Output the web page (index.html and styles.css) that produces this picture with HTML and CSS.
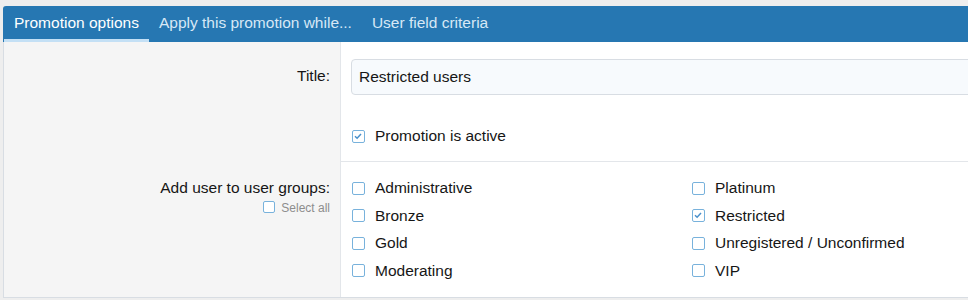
FILE: index.html
```html
<!DOCTYPE html>
<html lang="en">
<head>
    <meta charset="UTF-8">
    <meta name="viewport" content="width=device-width, initial-scale=1.0">
    <title>Promotion options</title>
    <link rel="stylesheet" href="styles.css">
</head>
<body>
    <div id="main">
        <div class="tabs">
            <span class="tab active">Promotion options</span>
            <span class="tab">Apply this promotion while...</span>
            <span class="tab">User field criteria</span>
        </div>

        <div class="form-row">
            <div class="row-label title-label">Title:</div>
            <div class="row-field">
                <input class="text-input" type="text" value="Restricted users">
                <div class="check-line active-line">
                    <span class="box checked"><svg viewBox="0 0 10 10"><path d="M2 5.2 L4.1 7.2 L8 3" /></svg></span>
                    <span>Promotion is active</span>
                </div>
            </div>
        </div>

        <div class="form-row">
            <div class="row-label groups-label">
                <div>Add user to user groups:</div>
                <div class="select-all"><span class="box small"></span>Select all</div>
            </div>
            <div class="row-field groups">
                <div class="check-line"><span class="box"></span><span>Administrative</span></div>
                <div class="check-line"><span class="box"></span><span>Platinum</span></div>
                <div class="check-line"><span class="box"></span><span>Bronze</span></div>
                <div class="check-line"><span class="box checked"><svg viewBox="0 0 10 10"><path d="M2 5.2 L4.1 7.2 L8 3" /></svg></span><span>Restricted</span></div>
                <div class="check-line"><span class="box"></span><span>Gold</span></div>
                <div class="check-line"><span class="box"></span><span>Unregistered / Unconfirmed</span></div>
                <div class="check-line"><span class="box"></span><span>Moderating</span></div>
                <div class="check-line"><span class="box"></span><span>VIP</span></div>
            </div>
        </div>
    </div>
</body>
</html>
```

FILE: styles.css
```css
body {
    font-family: "Liberation Sans", Arial, sans-serif;
    font-size: 15.5px;
    color: #161616;
    background: #eeeeee;
    margin: 0;
    padding: 6px 0 0 3px;
    overflow: hidden;
}

#main {
    width: 1000px;
    background: #ffffff;
    border: 1px solid #d8dde3;
    border-top: none;
    border-radius: 3px 3px 0 0;
}

.tabs {
    display: flex;
    background: #2677b2;
    height: 36px;
    border-radius: 3px 3px 0 0;
    margin: 0 -1px;
    padding-left: 1px;
}

.tab {
    padding: 0 10px;
    line-height: 34px;
    color: #d7e8f6;
    border-bottom: 3px solid transparent;
    font-size: 15.5px;
}

.tab.active {
    color: #ffffff;
    border-bottom-color: #c4e0f5;
}

.form-row {
    display: grid;
    grid-template-columns: 337px 1fr;
}

.row-label {
    background: #f5f5f5;
    text-align: right;
    padding-right: 10px;
    border-right: 1px solid #e3e6ea;
}

.title-label {
    padding-top: 25px;
}

.groups-label {
    padding-top: 16px;
    line-height: 20px;
}

.row-field {
    padding: 17px 10px 15px;
    border-bottom: 1px solid #e3e6ea;
}

.form-row:last-child .row-field {
    border-bottom: none;
}

.text-input {
    display: block;
    box-sizing: border-box;
    width: 100%;
    height: 36px;
    font-family: inherit;
    font-size: 15.5px;
    color: #161616;
    background: #f7fafd;
    border: 1px solid #d8dde3;
    border-radius: 4px;
    padding: 0 7px;
}

.check-line {
    display: flex;
    align-items: center;
    gap: 10px;
    line-height: 20px;
    padding-left: 1px;
}

.active-line {
    margin-top: 31px;
}

.groups {
    display: grid;
    grid-template-columns: 340px 340px;
    row-gap: 7.5px;
    padding-top: 16px;
    padding-bottom: 16px;
}

.box {
    display: inline-block;
    box-sizing: border-box;
    width: 13px;
    height: 13px;
    border: 1.5px solid #78b2dc;
    border-radius: 2px;
    background: #ffffff;
    flex: none;
}

.box svg {
    display: block;
    width: 10px;
    height: 10px;
}

.box path {
    fill: none;
    stroke: #4a90cb;
    stroke-width: 1.5;
}

.box.small {
    width: 12px;
    height: 12px;
    margin-right: 6px;
    vertical-align: -1px;
}

.select-all {
    font-size: 12px;
    color: #8d8d8d;
}
```
